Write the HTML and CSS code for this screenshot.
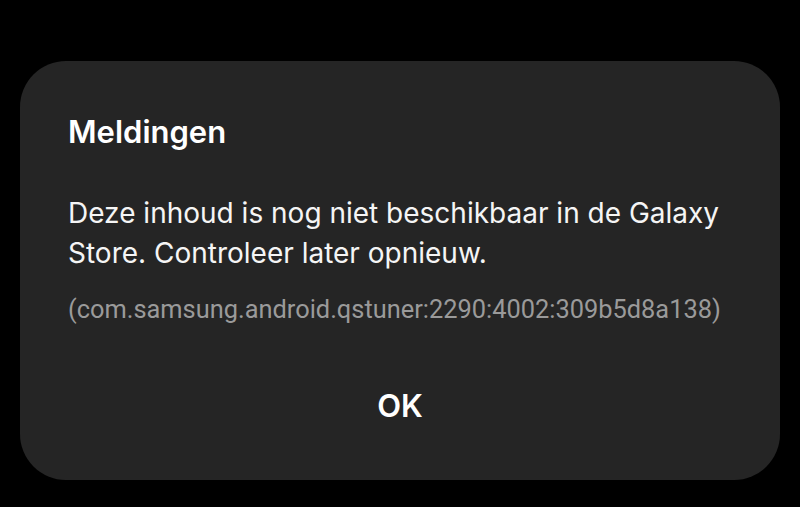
FILE: index.html
```html
<!DOCTYPE html>
<html>
<head>
  <meta charset="utf-8">
  <link rel="stylesheet" href="styles.css">
</head>
<body class="screen">
<div class="dialog">
  <div class="title">Meldingen</div>
  <div class="message">Deze inhoud is nog niet beschikbaar in de Galaxy Store. Controleer later opnieuw.</div>
  <div class="code">(com.samsung.android.qstuner:2290:4002:309b5d8a138)</div>
  <div class="buttons"><span class="ok">OK</span></div>
</div>
</body>
</html>
```

FILE: styles.css
```css
.screen { margin:0; background:#000000; font-family:Inter,"Noto Sans",sans-serif; color:#FFFFFF; }
.dialog { margin:61px 20px 0 20px; height:419px; box-sizing:border-box; background:#252525; border-radius:46px; padding:52px 48px 0 48px; }
.title { font-size:31px; font-weight:600; line-height:38px; }
.message { font-size:28px; line-height:40px; margin-top:42px; color:#F5F5F5; }
.code { font-family:Roboto,sans-serif; font-size:25.4px; line-height:32px; margin-top:20px; color:#9A9A9A; }
.buttons { text-align:center; margin-top:62px; }
.ok { font-size:31px; font-weight:600; line-height:38px; }
```
